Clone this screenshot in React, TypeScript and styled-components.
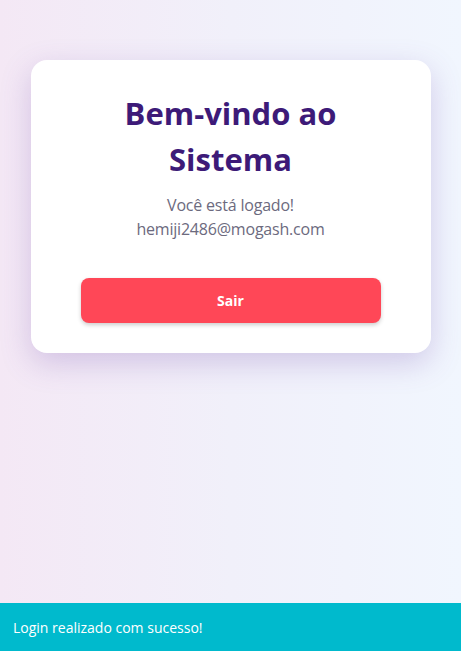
import React from "react";
import styled, { createGlobalStyle } from "styled-components";

const Global = createGlobalStyle`
  html, body { margin: 0; padding: 0; height: 100%; }
  body {
    font-family: "Open Sans", "Noto Sans", sans-serif;
    background: linear-gradient(90deg, #f4e8f5 0%, #f1f0fa 50%, #f1f6fe 100%);
    min-height: 651px;
  }
  #root { min-height: 651px; }
`;

const Page = styled.div`
  min-height: 651px;
  display: flex;
  flex-direction: column;
  align-items: center;
  padding-top: 60px;
  box-sizing: border-box;
`;

const Card = styled.div`
  width: 400px;
  box-sizing: border-box;
  background: #ffffff;
  border-radius: 16px;
  padding: 30px 50px;
  box-shadow: 0 10px 30px rgba(110, 70, 170, 0.25);
  display: flex;
  flex-direction: column;
  align-items: center;
  text-align: center;
`;

const Title = styled.h1`
  margin: 0;
  font-size: 31px;
  line-height: 46px;
  font-weight: 700;
  color: #3d1a78;
`;

const Info = styled.p`
  margin: 11px 0 37px;
  font-size: 16px;
  line-height: 24px;
  letter-spacing: -0.2px;
  color: #6c6a7e;
`;

const Button = styled.button`
  width: 300px;
  height: 45px;
  border: none;
  border-radius: 8px;
  background: #ff4757;
  color: #fff;
  font-family: inherit;
  font-size: 14px;
  font-weight: 700;
  box-shadow: 0 2px 4px rgba(0, 0, 0, 0.2);
  cursor: pointer;
`;

const Toast = styled.div`
  margin-top: auto;
  width: 100%;
  height: 48px;
  box-sizing: border-box;
  background: #00bacd;
  color: #fff;
  font-size: 14px;
  display: flex;
  align-items: center;
  padding: 0 13px;
`;

export default function App() {
  return (
    <>
      <Global />
      <Page>
        <Card>
          <Title>Bem-vindo ao Sistema</Title>
          <Info>
            Você está logado!
            <br />
            hemiji2486@mogash.com
          </Info>
          <Button>Sair</Button>
        </Card>
        <Toast>Login realizado com sucesso!</Toast>
      </Page>
    </>
  );
}
